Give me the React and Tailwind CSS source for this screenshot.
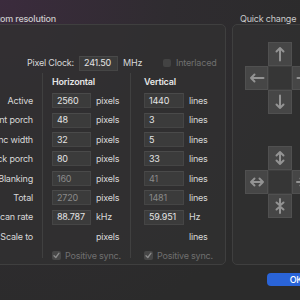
import React from "react";

const Arrow = ({ d, w = 10, h = 16 }) => (
  <svg width={w} height={h} viewBox={`0 0 ${w} ${h}`} fill="none" stroke="#939393" strokeWidth="2" strokeLinecap="round" strokeLinejoin="round">
    <path d={d} />
  </svg>
);

const Btn = ({ children }) => (
  <div className="flex items-center justify-center bg-[#464646] border border-[#505050]">{children}</div>
);
const Empty = () => <div />;
const Center = () => <div className="bg-[#363636] border border-[#3f3f3f]" />;

const Input = ({ value, disabled, w = "w-[39px]" }) => (
  <div className={`${w} h-[15px] bg-[#3b3b3b] border border-[#454545] border-t-[#4a4a4a] flex items-center pl-[4px] ${disabled ? "text-[#8a8a8a]" : "text-[#e4e4e4]"}`}>
    {value}
  </div>
);

const Check = () => (
  <div className="w-[9px] h-[9px] rounded-[2px] bg-[#474747] flex items-center justify-center">
    <svg width="7" height="7" viewBox="0 0 7 7" fill="none" stroke="#8c8c8c" strokeWidth="1.3" strokeLinecap="round" strokeLinejoin="round">
      <path d="M1 3.8L2.8 5.5L6 1.2" />
    </svg>
  </div>
);

const labels = ["Active", "Front porch", "Sync width", "Back porch", "Blanking", "Total", "Scan rate", "Scale to"];
const hVals = [["2560"], ["48"], ["32"], ["80"], ["160", true], ["2720", true], ["88.787"], null];
const vVals = [["1440"], ["3"], ["5"], ["33"], ["41", true], ["1481", true], ["59.951"], null];
const hUnits = ["pixels", "pixels", "pixels", "pixels", "pixels", "pixels", "kHz", "pixels"];
const vUnits = ["lines", "lines", "lines", "lines", "lines", "lines", "Hz", "lines"];

export default function App() {
  return (
    <div className="w-[300px] h-[300px] overflow-hidden bg-[#2b2b2b] bg-[radial-gradient(ellipse_at_top_left,#3b2b3d_0%,#2f2c30_40%,#2b2b2b_80%)] font-['Inter',sans-serif] text-[9px] tracking-[-0.2px] text-[#d8d8d8]">
      <div className="flex flex-col pt-[14px]">
        <div className="flex gap-[6px] -ml-[30px]">
          {/* Left group */}
          <div className="w-[256px] shrink-0 flex flex-col">
            <div className="h-[10px] leading-[10px] pl-[11px] font-medium text-[#cacaca] whitespace-nowrap">Custom resolution</div>
            <div className="h-[241px] rounded-[5px] border border-[#3f3f3f] bg-[#313131]/80 flex flex-col pt-[28px]">
              <div className="h-[20px] flex items-center">
                <div className="w-[103px] text-right whitespace-nowrap">Pixel Clock:</div>
                <div className="ml-[5px]"><Input value="241.50" /></div>
                <div className="ml-[5px] w-[40px]">MHz</div>
                <div className="w-[8px] h-[8px] rounded-[2px] bg-[#434343]" />
                <div className="ml-[5px] text-[#6f6f6f]">Interlaced</div>
              </div>
              <div className="flex">
                <div className="w-[71px] shrink-0 flex flex-col text-right pr-[9px]">
                  <div className="h-[18px]" />
                  {labels.map((l) => (
                    <div key={l} className="h-[19.4px] leading-[19.4px] whitespace-nowrap">{l}</div>
                  ))}
                </div>
                <div className="w-[88px] shrink-0 border-l border-[#404040] pl-[9px] flex flex-col">
                  <div className="h-[18px] flex items-center font-semibold text-[#e6e6e6]">Horizontal</div>
                  {hVals.map((v, i) => (
                    <div key={i} className="h-[19.4px] flex items-center gap-[5px]">
                      {v ? <Input value={v[0]} disabled={v[1]} /> : <div className="w-[39px]" />}
                      <span>{hUnits[i]}</span>
                    </div>
                  ))}
                  <div className="h-[11.4px] flex items-start">
                    <div className="h-[19.4px] flex items-center gap-[4px] shrink-0">
                      <Check />
                      <span className="text-[#707070]">Positive sync.</span>
                    </div>
                  </div>
                </div>
                <div className="w-[92px] shrink-0 border-l border-[#404040] pl-[13px] flex flex-col">
                  <div className="h-[18px] flex items-center font-semibold text-[#e6e6e6]">Vertical</div>
                  {vVals.map((v, i) => (
                    <div key={i} className="h-[19.4px] flex items-center gap-[5px]">
                      {v ? <Input value={v[0]} disabled={v[1]} w="w-[40px]" /> : <div className="w-[40px]" />}
                      <span>{vUnits[i]}</span>
                    </div>
                  ))}
                  <div className="h-[11.4px] flex items-start">
                    <div className="h-[19.4px] flex items-center gap-[4px] shrink-0">
                      <Check />
                      <span className="text-[#707070]">Positive sync.</span>
                    </div>
                  </div>
                </div>
              </div>
            </div>
          </div>
          {/* Right group */}
          <div className="w-[96px] shrink-0 flex flex-col">
            <div className="h-[10px] leading-[10px] pl-[8px] text-[#cacaca] whitespace-nowrap">Quick change</div>
            <div className="h-[241px] rounded-[5px] border border-[#3f3f3f] bg-[#313131]/80 flex flex-col pt-[17px] pl-[12px] gap-[32px]">
              <div className="grid grid-cols-[23px_24px_24px] grid-rows-[24px_24px_24px]">
                <Empty />
                <Btn><Arrow d="M5 14.5V2 M1.5 5.5L5 2L8.5 5.5" /></Btn>
                <Empty />
                <Btn><Arrow w={16} h={10} d="M14.5 5H2 M5.5 1.5L2 5L5.5 8.5" /></Btn>
                <Center />
                <Btn><Arrow w={16} h={10} d="M1.5 5H14 M10.5 1.5L14 5L10.5 8.5" /></Btn>
                <Empty />
                <Btn><Arrow d="M5 1.5V14 M1.5 10.5L5 14L8.5 10.5" /></Btn>
                <Empty />
              </div>
              <div className="grid grid-cols-[23px_24px_24px] grid-rows-[24px_24px_24px]">
                <Empty />
                <Btn><Arrow d="M5 2V14 M1.5 5.5L5 2L8.5 5.5 M1.5 10.5L5 14L8.5 10.5" /></Btn>
                <Empty />
                <Btn><Arrow w={16} h={10} d="M2 5H14 M5.5 1.5L2 5L5.5 8.5 M10.5 1.5L14 5L10.5 8.5" /></Btn>
                <Center />
                <Btn><Arrow w={16} h={10} d="M1 5H7 M4.5 1.5L7.5 5L4.5 8.5 M15 5H9 M11.5 1.5L8.5 5L11.5 8.5" /></Btn>
                <Empty />
                <Btn><Arrow d="M5 1V7 M1.5 4.5L5 7.5L8.5 4.5 M5 15V9 M1.5 11.5L5 8.5L8.5 11.5" /></Btn>
                <Empty />
              </div>
            </div>
          </div>
        </div>
        <div className="pl-[267px] pt-[8px]">
          <div className="w-[58px] h-[13px] rounded-[4px] bg-[#2a64d8] flex items-center justify-center text-white font-medium">OK</div>
        </div>
      </div>
    </div>
  );
}
